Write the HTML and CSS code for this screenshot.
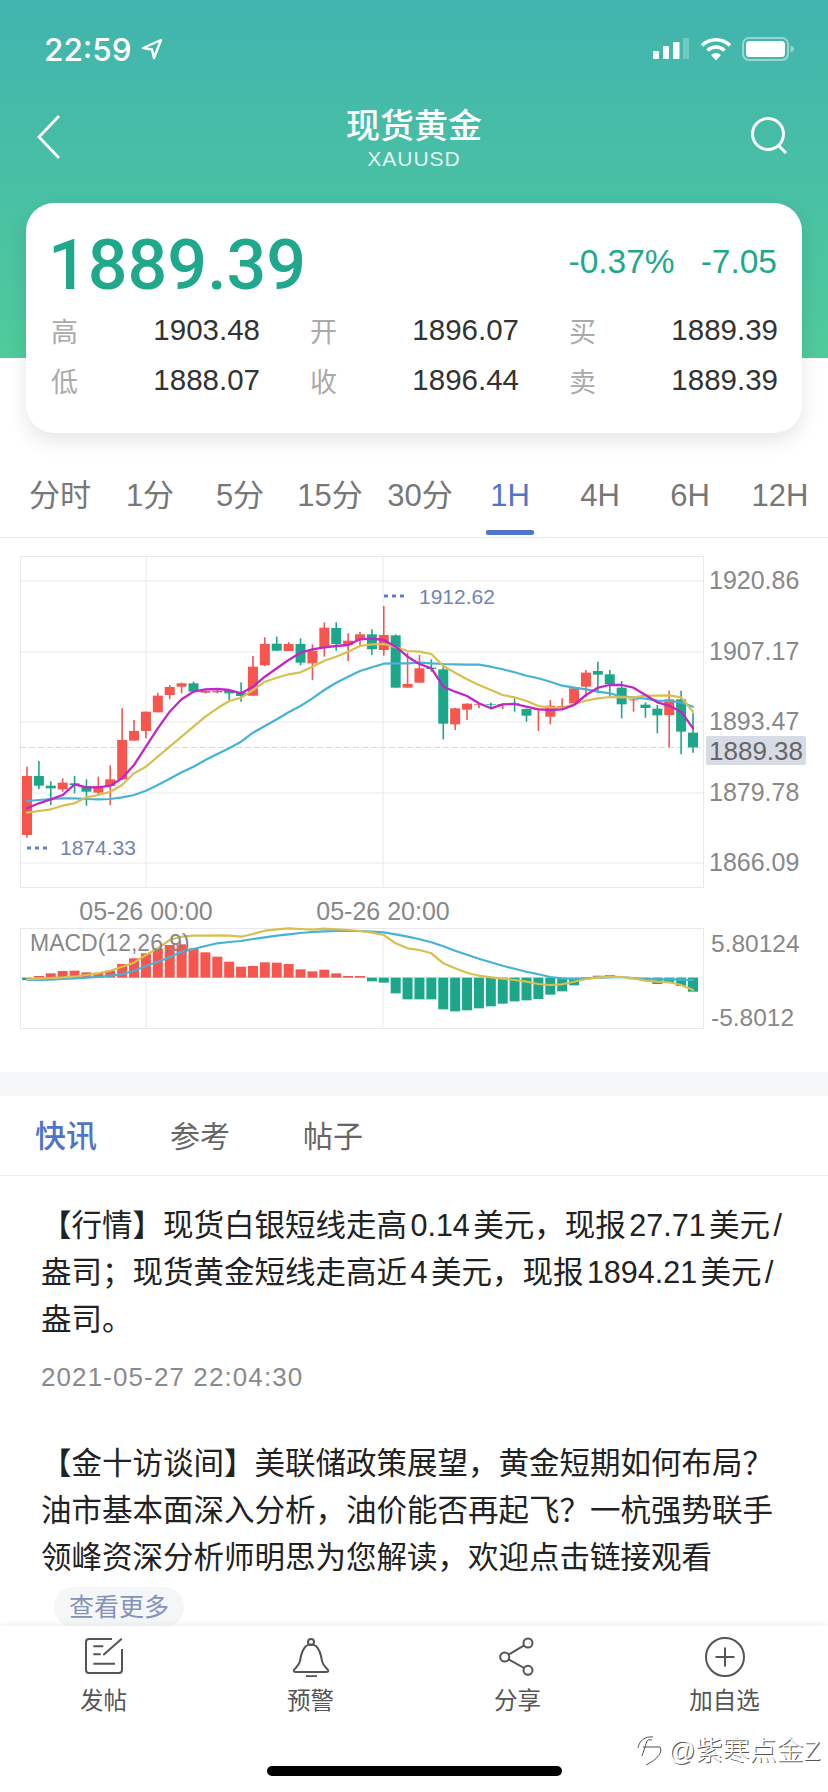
FILE: index.html
```html
<!DOCTYPE html>
<html lang="zh">
<head>
    <meta charset="UTF-8">
    <meta name="viewport" content="width=device-width, initial-scale=1.0">
    <title>现货黄金</title>
    <link rel="stylesheet" href="styles.css">
</head>
<body>
    <header class="hero">
        <div class="status">
            <div class="clock">
                <span>22:59</span>
                <svg width="22" height="22" viewBox="0 0 22 22"><path d="M20 2 L2 10 L11 11.5 L13 20 Z" fill="none" stroke="#fff" stroke-width="2.4" stroke-linejoin="round"/></svg>
            </div>
            <div class="status-icons">
                <svg width="38" height="22" viewBox="0 0 38 22">
                    <rect x="1" y="13" width="6" height="8" rx="1" fill="#fff"/>
                    <rect x="11" y="8" width="6" height="13" rx="1" fill="#fff"/>
                    <rect x="21" y="4" width="6.5" height="17" rx="1" fill="#fff"/>
                    <rect x="31" y="0" width="6" height="21" rx="1" fill="#fff" opacity=".25"/>
                </svg>
                <svg width="32" height="24" viewBox="0 0 32 24">
                    <path d="M2 8.5 A20 20 0 0 1 30 8.5" fill="none" stroke="#fff" stroke-width="3.6"/>
                    <path d="M7.5 13.5 A12 12 0 0 1 24.5 13.5" fill="none" stroke="#fff" stroke-width="3.6"/>
                    <path d="M11 18 A7 7 0 0 1 21 18 L16 23.5 Z" fill="#fff"/>
                </svg>
                <svg width="53" height="24" viewBox="0 0 53 24">
                    <rect x="1" y="1" width="45" height="22" rx="6" fill="none" stroke="#fff" stroke-width="2" opacity=".45"/>
                    <rect x="4" y="4" width="39" height="16" rx="3.5" fill="#fff"/>
                    <path d="M48.5 8.5 Q52 10 52 12 Q52 14 48.5 15.5 Z" fill="#fff" opacity=".45"/>
                </svg>
            </div>
        </div>
        <nav class="topnav">
            <svg class="back" width="26" height="46" viewBox="0 0 26 46"><path d="M23 2 L3 23 L23 44" fill="none" stroke="#fff" stroke-width="2.8"/></svg>
            <div class="title">
                <h1>现货黄金</h1>
                <p>XAUUSD</p>
            </div>
            <svg class="search" width="38" height="38" viewBox="0 0 38 38"><circle cx="18" cy="18" r="15.5" fill="none" stroke="#fff" stroke-width="3"/><path d="M28 29 L36 37" stroke="#fff" stroke-width="3"/></svg>
        </nav>
        <section class="quote">
            <div class="quote-top">
                <span class="price">1889.39</span>
                <div class="change">
                    <span>-0.37%</span>
                    <span>-7.05</span>
                </div>
            </div>
            <div class="stats">
                <div class="stat"><span>高</span><b>1903.48</b></div>
                <div class="stat"><span>开</span><b>1896.07</b></div>
                <div class="stat"><span>买</span><b>1889.39</b></div>
                <div class="stat"><span>低</span><b>1888.07</b></div>
                <div class="stat"><span>收</span><b>1896.44</b></div>
                <div class="stat"><span>卖</span><b>1889.39</b></div>
            </div>
        </section>
    </header>

    <div class="periods">
        <a>分时</a>
        <a>1分</a>
        <a>5分</a>
        <a>15分</a>
        <a>30分</a>
        <a class="active">1H</a>
        <a>4H</a>
        <a>6H</a>
        <a>12H</a>
    </div>

    <svg class="chart" width="828" height="534" viewBox="0 538 828 534">
        <g class="grid">
            <line x1="20" y1="581" x2="704" y2="581"/>
            <line x1="20" y1="652" x2="704" y2="652"/>
            <line x1="20" y1="722" x2="704" y2="722"/>
            <line x1="20" y1="793" x2="704" y2="793"/>
            <line x1="20" y1="863" x2="704" y2="863"/>
            <line x1="146" y1="557" x2="146" y2="888"/>
            <line x1="383" y1="557" x2="383" y2="888"/>
            <line x1="146" y1="928" x2="146" y2="1028"/>
            <line x1="383" y1="928" x2="383" y2="1028"/>
            <line x1="20" y1="977.5" x2="704" y2="977.5"/>
            <rect x="20.5" y="556.5" width="683" height="331"/>
            <rect x="20.5" y="928.5" width="683" height="100"/>
        </g>
        <line class="last-line" x1="20" y1="747.5" x2="704" y2="747.5"/>
        <g id="candles"></g>
        <g id="maLines"></g>
        <g id="macdBars"></g>
        <g id="macdLines"></g>

        <line class="mark" x1="384" y1="596" x2="405" y2="596"/>
        <text class="mark-text" x="419" y="604">1912.62</text>
        <line class="mark" x1="27" y1="848" x2="48" y2="848"/>
        <text class="mark-text" x="60" y="855">1874.33</text>

        <g class="axis">
            <text x="709" y="589">1920.86</text>
            <text x="709" y="660">1907.17</text>
            <text x="709" y="730">1893.47</text>
            <text x="709" y="801">1879.78</text>
            <text x="709" y="871">1866.09</text>
            <rect class="last-tag" x="706" y="736" width="100" height="29" rx="2"/>
            <text class="last-text" x="709" y="760">1889.38</text>
            <text class="macd-scale" x="711" y="952">5.80124</text>
            <text class="macd-scale" x="711" y="1026">-5.8012</text>
        </g>
        <g class="times">
            <text x="146" y="920">05-26 00:00</text>
            <text x="383" y="920">05-26 20:00</text>
        </g>
        <text class="macd-name" x="30" y="951">MACD(12,26,9)</text>
    </svg>

    <div class="gap"></div>

    <div class="tabs">
        <a class="active">快讯</a>
        <a>参考</a>
        <a>帖子</a>
    </div>

    <main class="news">
        <article class="item">
            <p>【行情】现货白银短线走高 0.14 美元，现报 27.71 美元 /<br>盎司；现货黄金短线走高近 4 美元，现报 1894.21 美元 /<br>盎司。</p>
            <time>2021-05-27 22:04:30</time>
        </article>
        <article class="item">
            <p>【金十访谈间】美联储政策展望，黄金短期如何布局？<br>油市基本面深入分析，油价能否再起飞？一杭强势联手<br>领峰资深分析师明思为您解读，欢迎点击链接观看</p>
            <span class="more">查看更多</span>
        </article>
    </main>

    <footer class="toolbar">
        <a>
            <svg width="40" height="40" viewBox="0 0 40 40" fill="none" stroke="#555" stroke-width="2">
                <path d="M28 2 H5 a3 3 0 0 0 -3 3 V33 a3 3 0 0 0 3 3 H35 a3 3 0 0 0 3 -3 V12"/>
                <path d="M19.3 18 L37.7 1.7 M9.3 9.3 H19.3 M9.3 17.3 H16.7 M9.3 26.7 H31"/>
            </svg>
            发帖
        </a>
        <a>
            <svg width="40" height="40" viewBox="0 0 40 40" fill="none" stroke="#555" stroke-width="2">
                <circle cx="20" cy="5" r="3"/>
                <path d="M15 9 C11 13 10 17 9 24 C8.5 28 5 30 3 33 Q2 35 5 35 H35 Q38 35 37 33 C35 30 31.5 28 31 24 C30 17 29 13 25 9 Q20 6 15 9 Z"/>
                <path d="M15 39.2 H26"/>
            </svg>
            预警
        </a>
        <a>
            <svg width="40" height="40" viewBox="0 0 40 40" fill="none" stroke="#555" stroke-width="2">
                <circle cx="30" cy="6" r="4.5"/>
                <circle cx="6.7" cy="20" r="4.5"/>
                <circle cx="30" cy="33.3" r="4.5"/>
                <path d="M10.6 17.7 L26.1 8.4 M10.6 22.3 L26.1 31"/>
            </svg>
            分享
        </a>
        <a>
            <svg width="40" height="40" viewBox="0 0 40 40" fill="none" stroke="#555" stroke-width="2">
                <circle cx="20" cy="20" r="19"/>
                <path d="M10.5 20 H29.5 M20 10.5 V29.5"/>
            </svg>
            加自选
        </a>
        <div class="stamp">
            <svg width="30" height="34" viewBox="0 0 30 34" fill="none" stroke="#555" stroke-width="1">
                <path d="M2 16 C3 9 9 4 17 5 M6 24 L11 9 Q12 7 16 8 M7 15 H24 C27 20 22 27 10 33"/>
            </svg>
            <span>@紫寒点金Z</span>
        </div>
        <div class="home-bar"></div>
    </footer>

    <script src="chart.js"></script>
</body>
</html>
```

FILE: styles.css
```css
* {
    box-sizing: border-box;
}
body {
    font-family: "Liberation Sans", "Noto Sans CJK SC", sans-serif;
    background: #fff;
    color: #222;
    margin: 0;
    width: 828px;
    height: 1792px;
    overflow: hidden;
    display: flex;
    flex-direction: column;
}
a {
    text-decoration: none;
}

/* green header */
.hero {
    flex: none;
    height: 358px;
    background: linear-gradient(#41b4ae, #4fcb9b);
    color: #fff;
}
.status {
    height: 98px;
    display: flex;
    justify-content: space-between;
    align-items: center;
    padding: 0 33px 0 44px;
}
.clock {
    display: flex;
    align-items: center;
    gap: 9px;
    font-family: Inter, sans-serif;
    font-weight: 500;
    font-size: 31.5px;
}
.status-icons {
    display: flex;
    align-items: center;
    gap: 10px;
}
.topnav {
    height: 105px;
    display: flex;
    justify-content: space-between;
    align-items: flex-start;
    padding: 16px 40px 0;
}
.back {
    margin: 0 16px 0 -4px;
}
.search {
    margin-top: 2px;
}
.title {
    text-align: center;
    margin-top: -8px;
}
.title h1 {
    margin: 0;
    font-size: 34px;
    font-weight: 500;
    line-height: 40px;
}
.title p {
    margin: -1px 0 0;
    font-size: 21px;
    line-height: 28px;
    letter-spacing: 1px;
    opacity: .85;
}

/* quote card */
.quote {
    margin: 0 26px;
    height: 230px;
    padding: 25px 25px 0;
    background: #fff;
    border-radius: 28px;
    box-shadow: 0 8px 20px rgba(0,0,0,0.1);
    color: #333;
}
.quote-top {
    display: flex;
    justify-content: space-between;
    align-items: center;
    height: 74px;
    margin-bottom: 3px;
    color: #1fa88b;
}
.price {
    margin-left: -3px;
    font-family: Roboto, sans-serif;
    font-weight: 500;
    font-size: 70px;
}
.change {
    display: flex;
    gap: 26px;
    font-size: 33.5px;
    margin-top: -6px;
}
.stats {
    display: grid;
    grid-template-columns: repeat(3, 209px);
    column-gap: 50px;
    grid-auto-rows: 50px;
    align-items: center;
}
.stat {
    display: flex;
    justify-content: space-between;
    align-items: center;
    font-size: 29.5px;
}
.stat span {
    color: #aaa;
    font-size: 27px;
}
.stat b {
    font-weight: 400;
}

/* period switch */
.periods {
    flex: none;
    margin-top: 75px;
    padding: 41px 3px 0 15px;
    height: 105px;
    display: flex;
    border-bottom: 1px solid #e8e8e8;
}
.periods a {
    position: relative;
    flex: 1;
    text-align: center;
    font-size: 31px;
    line-height: 44px;
    color: #777;
}
.periods a.active {
    color: #4f74c9;
}
.periods a.active::after {
    content: "";
    position: absolute;
    left: 21px;
    bottom: 2px;
    width: 48px;
    height: 5px;
    border-radius: 2px;
    background: #4f74c9;
}

/* kline chart */
.chart {
    flex: none;
    display: block;
}
.grid line, .grid rect {
    stroke: #e9e9e9;
    stroke-width: 1;
    fill: none;
}
.last-line {
    stroke: #d4dcd8;
    stroke-width: 1;
    stroke-dasharray: 6 3;
}
.mark {
    stroke: #5d7fd0;
    stroke-width: 3;
    stroke-dasharray: 4 4;
}
.mark-text {
    fill: #6f84b6;
    font-size: 21px;
}
.axis text {
    fill: #888;
    font-size: 25px;
}
.axis .last-text {
    fill: #666;
    font-size: 26px;
}
.axis .macd-scale {
    font-size: 24.5px;
}
.last-tag {
    fill: #d7dbe6;
}
.times text {
    fill: #888;
    font-size: 25px;
    text-anchor: middle;
}
.macd-name {
    fill: #888;
    font-size: 23px;
}

.gap {
    flex: none;
    height: 24px;
    background: #f5f6f7;
}

/* news tabs */
.tabs {
    flex: none;
    height: 80px;
    padding: 0 0 4px 35px;
    display: flex;
    align-items: center;
    gap: 73px;
    border-bottom: 1px solid #ececec;
}
.tabs a {
    font-size: 30px;
    color: #666;
}
.tabs a.active {
    color: #4f74c9;
    font-size: 31px;
    font-weight: 500;
}

/* news list */
.news {
    flex: 1;
    min-height: 0;
    overflow: hidden;
    padding: 26px 0 0 41px;
}
.item p {
    margin: 0;
    font-size: 30.5px;
    line-height: 47px;
    word-spacing: -5px;
    color: #222;
}
.item time {
    display: block;
    margin-top: 16px;
    margin-bottom: 45px;
    font-size: 26px;
    line-height: 36px;
    color: #8a8a8a;
    letter-spacing: 1.1px;
}
.more {
    display: inline-block;
    margin: 6px 0 0 13px;
    height: 40px;
    padding: 0 15px;
    border-radius: 20px;
    background: #f5f6f7;
    color: #8493bb;
    font-size: 25px;
    line-height: 40px;
}

/* bottom toolbar */
.toolbar {
    position: relative;
    flex: none;
    height: 166px;
    padding-top: 11px;
    display: grid;
    grid-template-columns: repeat(4, 207px);
    align-items: start;
    background: #fff;
    box-shadow: 0 -2px 6px rgba(0,0,0,0.06);
}
.toolbar a {
    display: flex;
    flex-direction: column;
    align-items: center;
    gap: 8px;
    font-size: 23.5px;
    line-height: 32px;
    color: #555;
}
.stamp {
    position: absolute;
    right: 8px;
    top: 103px;
    display: flex;
    align-items: center;
    gap: 2px;
    font-size: 27px;
    font-weight: 300;
    color: #fff;
    text-shadow: 1px 1px 0 #555;
}
.home-bar {
    position: absolute;
    left: 267px;
    bottom: 16px;
    width: 295px;
    height: 10px;
    border-radius: 5px;
    background: #000;
}
```

FILE: chart.js
```js
// all series are kept at 3x chart scale, toPx turns them into page pixels
var KLINE_TOP = 540;
var MACD_TOP = 880;
var RED = "#f6564e";
var GREEN = "#1ca68a";

function xAt(i) {
    return 27 + i * 11.893;
}

function toPx(v, top) {
    return top + v / 3;
}

// wick top, wick bottom, body top, body bottom, color
var candles = [
    [680, 893, 708, 885, 1], [663, 748, 708, 737, 0], [724, 795, 737, 745, 0], [715, 755, 728, 748, 1],
    [708, 760, 730, 735, 0], [718, 797, 738, 755, 0], [710, 765, 738, 758, 1], [676, 795, 718, 738, 1],
    [505, 720, 600, 718, 1], [540, 602, 573, 602, 1], [515, 595, 515, 573, 1], [458, 517, 467, 517, 1],
    [435, 478, 441, 465, 1], [428, 460, 430, 440, 1], [425, 457, 430, 455, 0], [450, 460, 453, 458, 1],
    [445, 460, 453, 457, 1], [448, 480, 450, 460, 0], [427, 485, 458, 468, 0], [348, 467, 380, 467, 1],
    [292, 378, 312, 376, 1], [290, 333, 311, 332, 0], [306, 333, 312, 333, 1], [295, 376, 312, 368, 0],
    [313, 420, 332, 370, 1], [247, 350, 263, 322, 1], [247, 332, 264, 312, 0], [280, 363, 302, 315, 1],
    [276, 318, 283, 300, 1], [268, 345, 283, 328, 0], [198, 347, 285, 330, 1], [283, 443, 286, 443, 0],
    [338, 443, 432, 443, 1], [345, 428, 385, 428, 1], [358, 395, 383, 387, 0], [375, 598, 388, 551, 0],
    [503, 570, 505, 553, 1], [490, 540, 491, 509, 1], [490, 505, 492, 494, 1], [488, 505, 492, 494, 0],
    [490, 507, 492, 495, 1], [475, 515, 490, 494, 0], [505, 545, 507, 527, 0], [505, 573, 506, 509, 1],
    [480, 553, 497, 530, 1], [475, 510, 498, 502, 1], [440, 490, 445, 490, 1], [390, 470, 398, 440, 1],
    [365, 460, 393, 404, 0], [390, 468, 403, 433, 0], [423, 535, 443, 493, 0], [475, 515, 478, 481, 1],
    [487, 533, 494, 504, 0], [495, 580, 506, 526, 0], [452, 622, 478, 525, 1], [452, 643, 478, 575, 0],
    [520, 638, 578, 622, 0]
];

var ma5 = [805, 790, 778, 765, 733, 742, 742, 737, 715, 675, 620, 565, 515, 478, 455, 448, 447, 450, 460,
    440, 410, 385, 360, 338, 328, 322, 318, 315, 298, 296, 300, 320, 350, 372, 385, 440, 455, 468, 490,
    505, 493, 492, 500, 508, 510, 508, 495, 465, 443, 435, 435, 443, 465, 487, 497, 515, 565];
var ma10 = [818, 813, 808, 797, 790, 772, 765, 755, 735, 700, 680, 650, 620, 590, 560, 530, 505, 483, 473,
    450, 425, 413, 403, 397, 380, 362, 350, 335, 318, 313, 312, 322, 333, 335, 342, 378, 398, 418, 435,
    450, 465, 472, 483, 498, 503, 503, 493, 482, 475, 471, 472, 472, 467, 467, 466, 472, 515];
var ma20 = [783, 780, 777, 775, 775, 777, 778, 777, 772, 765, 752, 735, 716, 697, 680, 660, 642, 625, 605,
    578, 558, 538, 517, 498, 475, 450, 428, 410, 393, 382, 371, 370, 370, 368, 370, 372, 373, 374, 374,
    380, 388, 397, 407, 415, 425, 437, 443, 448, 455, 460, 470, 472, 476, 482, 483, 487, 500];

var MACD_ZERO = 293;
var macd = [300, 288, 280, 273, 272, 277, 278, 272, 252, 235, 220, 205, 195, 193, 205, 217, 230, 245, 260,
    258, 247, 248, 252, 268, 274, 269, 280, 288, 288, 304, 308, 340, 358, 358, 358, 388, 394, 391, 385,
    379, 371, 364, 361, 357, 344, 334, 316, 298, 287, 285, 291, 298, 303, 312, 307, 318, 335];
var dea = [298, 296, 294, 292, 289, 285, 280, 272, 260, 248, 225, 205, 180, 170, 167, 167, 166, 167, 170,
    162, 152, 148, 145, 147, 149, 146, 148, 150, 153, 158, 165, 190, 205, 210, 220, 250, 265, 278, 287,
    292, 296, 300, 305, 312, 315, 313, 305, 297, 292, 290, 291, 295, 302, 305, 307, 315, 330];
var dif = [300, 300, 299, 297, 295, 293, 291, 287, 283, 272, 258, 245, 232, 215, 207, 198, 190, 186, 183,
    177, 172, 167, 163, 159, 156, 154, 153, 153, 153, 155, 157, 163, 170, 178, 187, 199, 212, 224, 236,
    247, 257, 266, 275, 283, 291, 295, 297, 295, 293, 292, 291, 294, 298, 298, 298, 299, 300];

function polyline(values, top, color, width) {
    var points = values.map(function(v, i) {
        return xAt(i).toFixed(1) + "," + toPx(v, top).toFixed(1);
    }).join(" ");
    return '<polyline points="' + points + '" fill="none" stroke="' + color + '" stroke-width="' + width + '" stroke-linejoin="round" stroke-linecap="round"/>';
}

var candleHtml = "";
candles.forEach(function(c, i) {
    var x = xAt(i);
    var color = c[4] ? RED : GREEN;
    var bodyTop = toPx(c[2], KLINE_TOP);
    var bodyHeight = (c[3] - c[2]) / 3;
    candleHtml += '<line x1="' + x + '" x2="' + x + '" y1="' + toPx(c[0], KLINE_TOP) + '" y2="' + toPx(c[1], KLINE_TOP) + '" stroke="' + color + '" stroke-width="1.6"/>';
    candleHtml += '<rect x="' + (x - 5) + '" y="' + bodyTop + '" width="10" height="' + bodyHeight + '" fill="' + color + '"/>';
});
document.getElementById("candles").innerHTML = candleHtml;

document.getElementById("maLines").innerHTML =
    polyline(ma20, KLINE_TOP, "#45b3d8", 2.2) +
    polyline(ma10, KLINE_TOP, "#d8bf4e", 2.2) +
    polyline(ma5, KLINE_TOP, "#c026c8", 2.3);

var barHtml = "";
macd.forEach(function(v, i) {
    var up = v < MACD_ZERO;
    var top = toPx(Math.min(v, MACD_ZERO), MACD_TOP);
    var height = Math.abs(v - MACD_ZERO) / 3;
    barHtml += '<rect x="' + (xAt(i) - 5) + '" y="' + top + '" width="10" height="' + height + '" fill="' + (up ? RED : GREEN) + '"/>';
});
document.getElementById("macdBars").innerHTML = barHtml;

document.getElementById("macdLines").innerHTML =
    polyline(dif, MACD_TOP, "#45b3d8", 2.2) +
    polyline(dea, MACD_TOP, "#d8bf4e", 2.2);
```
